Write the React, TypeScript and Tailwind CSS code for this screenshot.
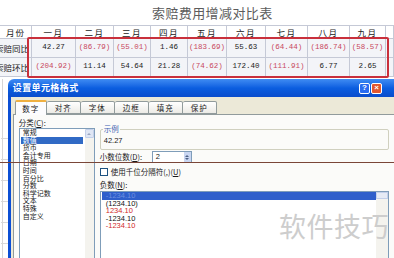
import React from 'react';

const months = ['一月', '二月', '三月', '四月', '五月', '六月', '七月', '八月', '九月'];

// negative values are shown red in brackets
const rows = [
  { label: '索赔同比', values: ['42.27', '(86.79)', '(55.01)', '1.46', '(183.69)', '55.63', '(64.44)', '(186.74)', '(58.57)'] },
  { label: '索赔环比', values: ['(204.92)', '11.14', '54.64', '21.28', '(74.62)', '172.40', '(111.91)', '6.77', '2.65'] },
];

const categories = ['常规', '数值', '货币', '会计专用', '日期', '时间', '百分比', '分数', '科学记数', '文本', '特殊', '自定义'];

const tabs = ['数字', '对齐', '字体', '边框', '填充', '保护'];

const negatives = [
  { text: '-1234.10', red: false, selected: true },
  { text: '(1234.10)', red: false },
  { text: '1234.10', red: true },
  { text: '-1234.10', red: false },
  { text: '-1234.10', red: true },
];

const cell = 'flex items-center justify-center border-r border-b border-[#c5c9d6] whitespace-nowrap';

const App = () => {
  return (
    <div className="relative w-[394px] h-[258px] overflow-hidden bg-white font-['Noto_Sans_CJK_SC',sans-serif] text-[#1a1a1a]">
      {/* sheet title */}
      <div className="h-[25px] pl-[152px] pt-[4px] text-[13px] leading-[17px] tracking-[0.4px] text-[#5c5c5c]">
        索赔费用增减对比表
      </div>

      {/* table */}
      <div className="grid grid-cols-[32px_44px_38px_37px_37px_39px_39px_42px_42px_36px_8px] border-t border-[#c5c9d6]">
        <div className={`${cell} h-[13px] text-[8.5px] tracking-[1px]`}>月份</div>
        {months.map(m => (
          <div key={m} className={`${cell} h-[13px] text-[8.5px] tracking-[1.5px]`}>{m}</div>
        ))}
        <div className={`${cell} h-[13px]`} />
        {rows.map(row => (
          <React.Fragment key={row.label}>
            <div className={`${cell} h-[19px] justify-end! pr-[2px] text-[8.5px] bg-[#f3f4f8]`}>{row.label}</div>
            {row.values.map((v, i) => (
              <div
                key={i}
                className={`${cell} h-[19px] bg-[#f3f4f8] font-['Liberation_Mono',monospace] text-[7.5px] ${v.startsWith('(') ? 'text-[#c8485e]' : 'text-[#222]'}`}
              >
                {v}
              </div>
            ))}
            <div className={`${cell} h-[19px] bg-[#f3f4f8]`} />
          </React.Fragment>
        ))}
      </div>

      {/* highlighted rows */}
      <div className="absolute left-[27px] top-[37px] w-[362px] h-[41px] border-2 border-[#c9303c] rounded-[2px]" />

      {/* dialog area */}
      <div className="flex mt-[2px]">
        <div className="w-[8px] flex flex-col pt-[59px] gap-[20px] border-l border-[#d6d6d6] ml-[2px]">
          {[0, 1, 2, 3, 4, 5].map(i => (
            <div key={i} className="h-px bg-[#d8d8d8] -ml-[2px]" />
          ))}
        </div>

        <div className="w-[400px] -ml-[2px] flex flex-col">
          {/* title bar */}
          <div className="h-[18px] rounded-tl-[6px] bg-linear-to-b from-[#3f8cf3] via-[#0b5ee0] to-[#0a4ccc] flex items-center pl-[5px] pr-[12px]">
            <span className="text-[9px] font-bold text-white tracking-[0.4px]">设置单元格格式</span>
            <div className="ml-auto flex gap-[1px]">
              <div className="w-[11px] h-[11px] rounded-[2px] border border-white bg-[#2a6cf0] flex items-center justify-center text-[8px] font-bold text-white font-['Liberation_Sans',sans-serif] leading-none">?</div>
              <div className="w-[11px] h-[11px] rounded-[2px] border border-white bg-[#e2572f] flex items-center justify-center text-[8px] font-bold text-white font-['Liberation_Sans',sans-serif] leading-none">×</div>
            </div>
          </div>

          {/* body */}
          <div className="flex-1 h-[170px] bg-[#ece9d8] border-l-[3px] border-[#0b4fd5] pl-[2px] pt-[3px]">
            <div className="flex pl-[2px] h-[14px] items-end">
              {tabs.map((t, i) => (
                <div
                  key={t}
                  className={
                    i === 0
                      ? 'w-[32px] h-[15px] -mb-px z-10 bg-[#fcfcfe] border border-b-0 border-[#919b9c] border-t-[#f0b040] border-t-2 rounded-t-[2px] flex items-center justify-center text-[7.5px] tracking-[1px]'
                      : 'w-[34px] h-[13px] bg-linear-to-b from-white to-[#ecebe6] border border-[#919b9c] border-l-0 rounded-t-[2px] flex items-center justify-center text-[7.5px] tracking-[1px]'
                  }
                >
                  {t}
                </div>
              ))}
            </div>

            <div className="h-[160px] bg-[#fbfbf9] border-t border-l border-[#919b9c] pl-[5px] pt-[3px] flex">
              {/* category list */}
              <div className="w-[76px] flex flex-col">
                <div className="h-[10px] text-[7.5px] leading-[10px]">
                  分类(<span className="underline">C</span>):
                </div>
                <div className="flex-1 border border-[#7f9db9] bg-white flex">
                  <div className="flex-1 pl-px">
                    {categories.map(c => (
                      <div
                        key={c}
                        className={`h-[7.6px] leading-[7.6px] text-[7px] px-[2px] w-[62px] ${c === '数值' ? 'bg-[#316ac5] text-white' : ''}`}
                      >
                        {c}
                      </div>
                    ))}
                  </div>
                  <div className="w-[9px] bg-[#f4f3ee] flex flex-col">
                    <div className="h-[9px] bg-[#dfe6f4] border border-[#c3d0ea] rounded-[1px] flex items-center justify-center">
                      <div className="w-0 h-0 border-l-[2.5px] border-r-[2.5px] border-b-[2.5px] border-transparent border-b-[#9aa6c0]" />
                    </div>
                  </div>
                </div>
              </div>

              {/* options */}
              <div className="w-[289px] ml-[5px] flex flex-col">
                <div className="relative mt-[11px] h-[21px] border border-[#d0d0bf] rounded-[2px] pl-[3px] pt-[6px] text-[7.5px] font-['Liberation_Sans',sans-serif] leading-[9px]">
                  <span className="absolute -top-[6px] left-[2px] px-px bg-[#fbfbf9] text-[#3c5fb3] font-['Noto_Sans_CJK_SC',sans-serif]">示例</span>
                  42.27
                </div>

                <div className="mt-px h-[12px] flex items-center text-[7.5px]">
                  <span className="w-[52px]">
                    小数位数(<span className="underline">D</span>):
                  </span>
                  <div className="w-[40px] h-[12px] border border-[#7f9db9] bg-white flex items-center">
                    <span className="flex-1 pl-[3px] font-['Liberation_Sans',sans-serif]">2</span>
                    <div className="w-[7px] h-full bg-[#c9d6f2] flex flex-col items-center justify-center gap-px">
                      <div className="w-0 h-0 border-l-2 border-r-2 border-b-2 border-transparent border-b-[#4d6185]" />
                      <div className="w-0 h-0 border-l-2 border-r-2 border-t-2 border-transparent border-t-[#4d6185]" />
                    </div>
                  </div>
                </div>

                <div className="mt-[4px] h-[9px] flex items-center text-[7.5px]">
                  <div className="w-[8px] h-[8px] border border-[#1c5180] bg-white" />
                  <span className="ml-[3px]">
                    使用千位分隔符(,)(<span className="underline">U</span>)
                  </span>
                </div>

                <div className="mt-[4px] h-[10px] text-[7.5px] leading-[10px]">
                  负数(<span className="underline">N</span>):
                </div>
                <div className="mt-px flex-1 border border-[#7f9db9] bg-white flex">
                  <div className="flex-1 pl-px">
                    {negatives.map((n, i) => (
                      <div
                        key={i}
                        className={`h-[7.5px] leading-[7.5px] pl-[4px] text-[7.5px] font-['Liberation_Sans',sans-serif] ${
                          n.selected ? 'bg-[#2f5fcb] text-[#6e8fe0]' : n.red ? 'text-[#d12a2a]' : 'text-[#111]'
                        }`}
                      >
                        {n.text}
                      </div>
                    ))}
                  </div>
                  <div className="w-[12px] bg-[#f4f3ee]">
                    <div className="h-[7px] bg-[#e6ebf5] border border-[#c3d0ea]" />
                  </div>
                </div>
              </div>
            </div>
          </div>
        </div>
      </div>

      {/* annotation line */}
      <div className="absolute left-0 top-[162px] w-full h-px bg-[#7a4638]" />

      {/* watermark */}
      <div className="absolute right-[5px] top-[209px] text-[27px] leading-[34px] text-[#cdcdcd] tracking-[0.5px]">
        软件技巧
      </div>
    </div>
  );
};

export default App;
